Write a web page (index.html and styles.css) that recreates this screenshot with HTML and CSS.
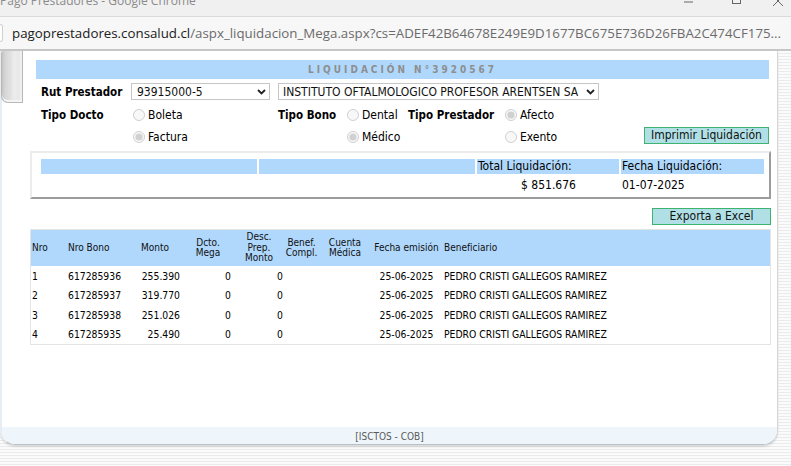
FILE: index.html
```html
<!DOCTYPE html>
<html lang="es">
<head>
<meta charset="utf-8">
<title>Pago Prestadores</title>
<link rel="stylesheet" href="styles.css">
</head>
<body>
<div class="chrome-title">
  <span class="win-title">Pago Prestadores - Google Chrome</span>
  <svg class="win-controls" width="120" height="17" viewBox="0 0 120 17">
    <line x1="13" y1="2" x2="22" y2="2" stroke="#666" stroke-width="1"/>
    <rect x="61.5" y="-5.5" width="8" height="9" fill="none" stroke="#666" stroke-width="1"/>
    <line x1="102" y1="-4" x2="112" y2="6" stroke="#666" stroke-width="1"/>
    <line x1="112" y1="-4" x2="102" y2="6" stroke="#666" stroke-width="1"/>
  </svg>
</div>
<div class="chrome-url">
  <span class="url-chip"></span>
  <span class="url-text"><span class="url-host">pagoprestadores.consalud.cl</span>/aspx_liquidacion_Mega.aspx?cs=ADEF42B64678E249E9D1677BC675E736D26FBA2C474CF175...</span>
</div>
<div class="viewport">
  <div class="panel">
    <div class="panel-body">
      <div class="gutter"><div class="handle"></div></div>
      <div class="main">
        <div class="sheet">
          <div class="sheet-title">LIQUIDACIÓN N°3920567</div>
          <div class="form-grid">
            <div class="lbl r1 c1">Rut Prestador</div>
            <div class="select sel-rut r1 c2"><span>93915000-5</span><svg class="chev" width="9" height="6" viewBox="0 0 9 6"><path d="M1 1 L4.5 4.5 L8 1" fill="none" stroke="#222" stroke-width="1.8"/></svg></div>
            <div class="select sel-name r1"><span>INSTITUTO OFTALMOLOGICO PROFESOR ARENTSEN SA</span><svg class="chev" width="9" height="6" viewBox="0 0 9 6"><path d="M1 1 L4.5 4.5 L8 1" fill="none" stroke="#222" stroke-width="1.8"/></svg></div>

            <div class="lbl r2 c1 pad2">Tipo Docto</div>
            <label class="opt r2 c2 pad2 o-docto"><input type="radio" name="docto" disabled>Boleta</label>
            <div class="lbl r2 c3 pad2">Tipo Bono</div>
            <label class="opt r2 c4 pad2 o-bono"><input type="radio" name="bono" disabled>Dental</label>
            <div class="lbl r2 c5 pad2">Tipo Prestador</div>
            <label class="opt r2 c6 pad2 o-prest"><input type="radio" name="prest" checked disabled>Afecto</label>

            <label class="opt r3 c2 o-docto"><input type="radio" name="docto" checked disabled>Factura</label>
            <label class="opt r3 c4 o-bono"><input type="radio" name="bono" checked disabled>Médico</label>
            <label class="opt r3 c6 o-prest"><input type="radio" name="prest" disabled>Exento</label>
            <button class="btn btn-print r3 c7">Imprimir Liquidación</button>
          </div>
        </div>

        <div class="totals">
          <div class="tot-head"></div>
          <div class="tot-head"></div>
          <div class="tot-head">Total Liquidación:</div>
          <div class="tot-head">Fecha Liquidación:</div>
          <div class="tot-val"></div>
          <div class="tot-val"></div>
          <div class="tot-val center">$ 851.676</div>
          <div class="tot-val">01-07-2025</div>
        </div>

        <div class="export-row"><button class="btn btn-export">Exporta a Excel</button></div>

        <table class="grid">
          <colgroup>
            <col class="w-nro"><col class="w-bono"><col class="w-monto"><col class="w-dcto"><col class="w-desc"><col class="w-benef"><col class="w-cuenta"><col class="w-fecha"><col class="w-benef2">
          </colgroup>
          <thead>
            <tr>
              <th class="l1">Nro</th>
              <th class="l2">Nro Bono</th>
              <th class="l2">Monto</th>
              <th class="ce">Dcto.<br>Mega</th>
              <th class="ce">Desc.<br>Prep.<br>Monto</th>
              <th class="ce">Benef.<br>Compl.</th>
              <th class="ce">Cuenta<br>Médica</th>
              <th class="ce nw">Fecha emisión</th>
              <th class="l3">Beneficiario</th>
            </tr>
          </thead>
          <tbody>
            <tr><td class="l1">1</td><td class="l2">617285936</td><td class="r3">255.390</td><td class="r2">0</td><td class="r2">0</td><td></td><td></td><td class="ce">25-06-2025</td><td class="l3">PEDRO CRISTI GALLEGOS RAMIREZ</td></tr>
            <tr><td class="l1">2</td><td class="l2">617285937</td><td class="r3">319.770</td><td class="r2">0</td><td class="r2">0</td><td></td><td></td><td class="ce">25-06-2025</td><td class="l3">PEDRO CRISTI GALLEGOS RAMIREZ</td></tr>
            <tr><td class="l1">3</td><td class="l2">617285938</td><td class="r3">251.026</td><td class="r2">0</td><td class="r2">0</td><td></td><td></td><td class="ce">25-06-2025</td><td class="l3">PEDRO CRISTI GALLEGOS RAMIREZ</td></tr>
            <tr><td class="l1">4</td><td class="l2">617285935</td><td class="r3">25.490</td><td class="r2">0</td><td class="r2">0</td><td></td><td></td><td class="ce">25-06-2025</td><td class="l3">PEDRO CRISTI GALLEGOS RAMIREZ</td></tr>
          </tbody>
        </table>
      </div>
    </div>
    <div class="panel-footer">[ISCTOS - COB]</div>
  </div>
</div>
</body>
</html>
```

FILE: styles.css
```css
* { box-sizing: border-box; }
html, body { margin: 0; padding: 0; }
body {
  width: 791px;
  height: 466px;
  overflow: hidden;
  background: repeating-linear-gradient(to bottom, #fbfbfb 0px, #fbfbfb 2px, #ebebeb 2px, #ebebeb 3px);
  font-family: "DejaVu Sans Condensed", "DejaVu Sans", sans-serif;
  font-stretch: condensed;
  color: #000;
}

/* browser chrome */
.chrome-title {
  height: 17px;
  background: #f0f0f0;
  border-bottom: 1px solid #dadada;
  display: flex;
  overflow: hidden;
}
.win-title {
  font-family: "Open Sans", "Noto Sans", sans-serif;
  font-stretch: normal;
  font-size: 12px;
  line-height: 12px;
  margin-top: -5px;
  color: #8a8a8a;
  white-space: nowrap;
}
.win-controls { margin-left: auto; flex: none; }

.chrome-url {
  height: 34px;
  background: #f7f7f7;
  border-bottom: 2px solid #c6c6c6;
  display: flex;
  align-items: center;
  overflow: hidden;
}
.url-chip {
  flex: none;
  width: 3px;
  height: 18px;
  background: #fff;
  border: 1px solid #d0d0d0;
  border-left: none;
  border-radius: 0 9px 9px 0;
}
.url-text {
  margin-left: 9px;
  font-family: "Open Sans", "Noto Sans", sans-serif;
  font-stretch: normal;
  font-size: 13.3px;
  color: #6b6b6b;
  white-space: nowrap;
}
.url-host { color: #202020; }

/* page */
.viewport { height: 415px; display: flex; }
.panel {
  width: 778px;
  height: 394px;
  background: #fff;
  border-left: 2px solid #e6edf4;
  border-right: 1px solid #d6d6d6;
  border-bottom: 1px solid #b9c0c6;
  border-radius: 0 0 15px 15px;
  box-shadow: 0 2px 2px rgba(0, 0, 0, 0.12);
  display: flex;
  flex-direction: column;
}
.panel-body { flex: 1; display: flex; }
.gutter { width: 28px; flex: none; }
.handle {
  width: 22px;
  height: 52px;
  margin-left: -1px;
  border: 1px solid #b8b8b8;
  border-top: none;
  border-radius: 3px 0 0 7px;
  background: linear-gradient(to right, #c4c4c4 0px, #d6d6d6 3px, #e2e2e2 9px, #ececec 12px, #e8e8e8 18px, #fafafa 19px, #e2e2e2 20px);
  box-shadow: inset 0 -2px 0 #f4f4f4;
}
.main { width: 741px; flex: none; padding-top: 9px; }

.sheet { margin-left: 6px; width: 733px; }
.sheet-title {
  height: 19px;
  line-height: 19px;
  background: #b0d8fc;
  color: #8e8e8e;
  font-weight: bold;
  font-size: 10px;
  letter-spacing: 3px;
  text-align: center;
}

.form-grid {
  display: grid;
  grid-template-columns: 90px 147px 69px 61px 96px 140px 125px;
  grid-template-rows: 17px 28px 18px;
  align-items: center;
  margin: 4px 0 0 5px;
}
.r1 { grid-row: 1; }
.r2 { grid-row: 2; }
.r3 { grid-row: 3; }
.c1 { grid-column: 1; }
.c2 { grid-column: 2; }
.c3 { grid-column: 3; }
.c4 { grid-column: 4; }
.c5 { grid-column: 5; }
.c6 { grid-column: 6; }
.c7 { grid-column: 7; }
.pad2 { padding-top: 2px; }

.lbl { font-weight: bold; font-size: 11.5px; white-space: nowrap; }

.select {
  height: 17px;
  border: 1px solid #c6c6c6;
  background: #fff;
  display: flex;
  align-items: center;
  justify-content: space-between;
  padding: 0 3px 0 5px;
  font-size: 12px;
  color: #111;
  white-space: nowrap;
}
.sel-rut { width: 139px; }
.sel-name { grid-column: 3 / 7; width: 321px; justify-self: start; padding-left: 4px; }
.chev { flex: none; }

.opt {
  display: flex;
  align-items: center;
  gap: 3px;
  font-size: 12px;
  white-space: nowrap;
}
.opt input { width: 12px; height: 12px; margin: 0; }
.o-docto input { margin-left: 2px; }
.o-prest input { margin-left: 1px; }

.btn {
  background: #b0e0e6;
  border: 1px solid #3cb371;
  font-family: inherit;
  font-stretch: condensed;
  font-size: 12px;
  line-height: 15px;
  color: #111;
  padding: 0;
}
.btn-print { width: 125px; height: 17px; align-self: start; margin-top: -1px; }

/* totals */
.totals {
  margin-top: 5px;
  border-style: solid;
  border-width: 2px;
  border-color: #ececec #9c9c9c #9c9c9c #ececec;
  padding: 6px 5px 3px 9px;
  display: grid;
  grid-template-columns: 216px 216px 142px 143px;
  grid-template-rows: 15px 18px;
  column-gap: 2px;
  row-gap: 2px;
  font-size: 12px;
}
.tot-head { background: #b0d8fc; line-height: 15px; padding-left: 1px; white-space: nowrap; }
.tot-val { line-height: 18px; padding-left: 1px; white-space: nowrap; }
.center { text-align: center; }

.export-row { display: flex; justify-content: flex-end; margin-top: 9px; }
.btn-export { width: 119px; height: 17px; }

/* grid table */
.grid {
  margin-top: 4px;
  width: 741px;
  table-layout: fixed;
  border-collapse: separate;
  border-spacing: 0;
  border: 1px solid #e4e4e4;
  font-size: 10.3px;
}
.w-nro { width: 35px; }
.w-bono { width: 73px; }
.w-monto { width: 44px; }
.w-dcto { width: 50px; }
.w-desc { width: 52px; }
.w-benef { width: 33px; }
.w-cuenta { width: 54px; }
.w-fecha { width: 69px; }
.w-benef2 { width: 329px; }

.grid th {
  background: #b0d8fc;
  height: 36px;
  font-weight: normal;
  font-size: 10px;
  line-height: 10.5px;
  vertical-align: middle;
  padding: 0;
  color: #111;
}
.grid td {
  height: 19.5px;
  padding: 0;
  white-space: nowrap;
  vertical-align: middle;
  line-height: 12px;
}
.grid .l1 { text-align: left; padding-left: 1px; }
.grid .l2 { text-align: left; padding-left: 2px; }
.grid .l3 { text-align: left; padding-left: 3px; }
.grid .r2 { text-align: right; padding-right: 2px; }
.grid .r3 { text-align: right; padding-right: 3px; }
.grid .ce { text-align: center; }
.grid .nw { white-space: nowrap; }

.panel-footer {
  height: 17px;
  background: #eef6fb;
  border-radius: 0 0 14px 14px;
  text-align: center;
  font-size: 10px;
  line-height: 15px;
  padding-top: 2px;
  color: #5a5a5a;
}
```
